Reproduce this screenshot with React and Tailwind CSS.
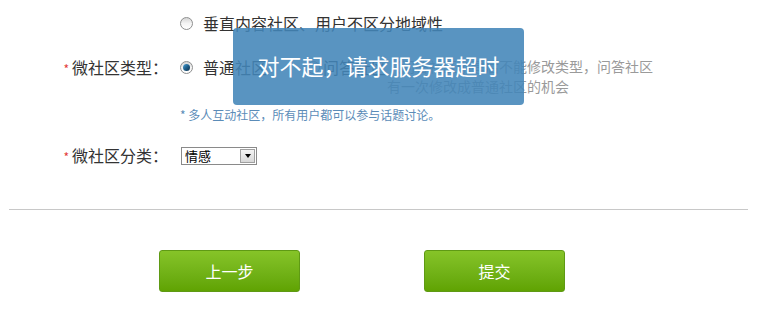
import React from "react"

function Radio({ checked }) {
    return (
        <span className="relative inline-flex h-[13px] w-[13px] shrink-0 items-center justify-center rounded-full border border-[#8e8f8f] bg-gradient-to-b from-[#d6d6d6] via-[#f4f4f4] to-[#ffffff]">
            {checked && (
                <span className="h-[7px] w-[7px] rounded-full bg-gradient-to-br from-[#4aa3d8] via-[#1f5f8b] to-[#0d2f4a]" />
            )}
        </span>
    )
}

function Label({ text }) {
    return (
        <div className="w-[168px] shrink-0 text-right text-[16px] leading-5 text-[#333]">
            <span className="mr-[3px] text-[12px] text-[#e23a3a]">*</span>
            {text}
        </div>
    )
}

export default function App() {
    return (
        <div
            className="relative h-[319px] w-[767px] overflow-hidden bg-white pt-[13px]"
            style={{ fontFamily: '"Noto Sans CJK SC", "Microsoft YaHei", sans-serif' }}
        >
            {/* row 1 */}
            <div className="flex h-5 items-center">
                <div className="w-[168px] shrink-0" />
                <div className="ml-[12px] flex items-center">
                    <Radio />
                    <span className="ml-[10px] text-[16px] leading-5 text-[#333]">垂直内容社区、用户不区分地域性</span>
                </div>
            </div>

            {/* row 2 */}
            <div className="mt-[24px] flex items-start">
                <Label text="微社区类型：" />
                <div className="ml-[12px] flex items-start">
                    <div className="flex h-5 items-center">
                        <Radio checked />
                        <span className="ml-[10px] text-[16px] leading-5 text-[#333]">普通社区</span>
                        <span className="ml-[40px]"><Radio /></span>
                        <span className="ml-[3px] text-[16px] leading-5 text-[#333]">问答社区</span>
                    </div>
                    <div className="-mt-[1px] w-[270px] text-[14px] leading-5 text-[#9a9a9a]">
                        （问答社区创建后不能修改类型，问答社区有一次修改成普通社区的机会
                    </div>
                </div>
            </div>

            {/* hint */}
            <div className="ml-[180px] mt-[11px] text-[12px] leading-4 text-[#5b8cb8]">
                * 多人互动社区，所有用户都可以参与话题讨论。
            </div>

            {/* row 3 */}
            <div className="mt-[23px] flex h-5 items-center">
                <Label text="微社区分类：" />
                <div className="ml-[13px] flex h-[18px] w-[76px] items-center justify-between border border-[#8a8a8a] bg-white pl-[3px] pr-[1px]">
                    <span className="text-[13px] leading-4 text-black">情感</span>
                    <span className="flex h-[14px] w-[15px] items-center justify-center border border-[#a0a0a0] bg-gradient-to-b from-[#f4f4f4] to-[#d8d8d8]">
                        <span className="h-0 w-0 border-x-[3.5px] border-t-[4px] border-x-transparent border-t-black" />
                    </span>
                </div>
            </div>

            <div className="ml-[9px] mt-[43px] h-px w-[739px] bg-[#c8c8c8]" />

            {/* buttons */}
            <div className="ml-[159px] mt-[40px] flex gap-[124px]">
                <button className="h-[42px] w-[141px] rounded-[3px] border border-[#5f9a14] bg-gradient-to-b from-[#86c428] to-[#60a302] text-[16px] text-white">
                    上一步
                </button>
                <button className="h-[42px] w-[141px] rounded-[3px] border border-[#5f9a14] bg-gradient-to-b from-[#86c428] to-[#60a302] text-[16px] text-white">
                    提交
                </button>
            </div>

            {/* toast */}
            <div className="absolute left-[233px] top-[28px] flex h-[77px] w-[291px] items-center justify-center rounded-[4px] bg-[rgba(66,133,184,0.88)] pb-[4px]">
                <span className="text-[22px] leading-7 text-white">对不起，请求服务器超时</span>
            </div>
        </div>
    )
}
